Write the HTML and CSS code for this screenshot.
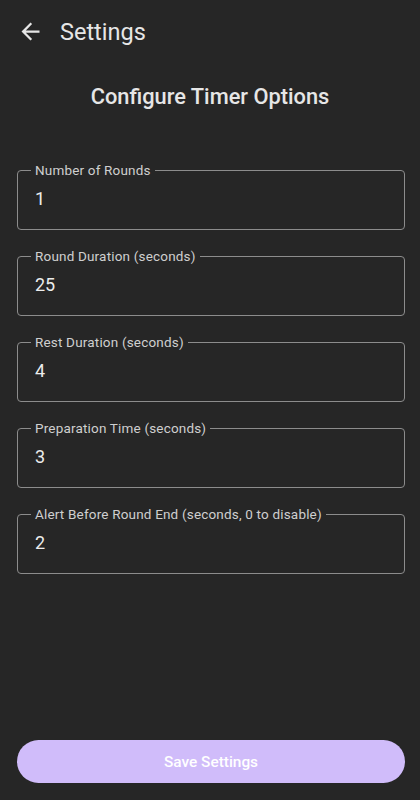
FILE: index.html
```html
<!DOCTYPE html>
<html lang="en">
<head>
<meta charset="utf-8">
<title>Settings</title>
<link rel="stylesheet" href="styles.css">
</head>
<body>
<div class="page">
  <header class="appbar">
    <svg class="back" viewBox="0 0 24 24" width="27" height="27" aria-hidden="true"><path d="M20 11H7.83l5.59-5.59L12 4l-8 8 8 8 1.41-1.41L7.83 13H20v-2z" fill="#e6e6e6"/></svg>
    <span class="appbar-title">Settings</span>
  </header>
  <h2 class="heading">Configure Timer Options</h2>
  <form class="form">
    <fieldset class="field"><legend class="field-label">Number of Rounds</legend><div class="field-value">1</div></fieldset>
    <fieldset class="field"><legend class="field-label">Round Duration (seconds)</legend><div class="field-value">25</div></fieldset>
    <fieldset class="field"><legend class="field-label">Rest Duration (seconds)</legend><div class="field-value">4</div></fieldset>
    <fieldset class="field"><legend class="field-label">Preparation Time (seconds)</legend><div class="field-value">3</div></fieldset>
    <fieldset class="field"><legend class="field-label">Alert Before Round End (seconds, 0 to disable)</legend><div class="field-value">2</div></fieldset>
  </form>
  <div class="spacer"></div>
  <button class="save" type="button">Save Settings</button>
</div>
</body>
</html>
```
FILE: styles.css
```css
html, body {
  margin: 0;
  padding: 0;
  background: #262626;
}
body {
  font-family: Roboto, "Liberation Sans", sans-serif;
  color: #e6e6e6;
}
.page {
  display: flex;
  flex-direction: column;
  min-height: 800px;
  box-sizing: border-box;
  padding-bottom: 17px;
}
.appbar {
  height: 63px;
  display: flex;
  align-items: center;
  gap: 16px;
  padding-left: 17px;
}
.back {
  display: block;
  flex: none;
}
.appbar-title {
  font-size: 23.5px;
  line-height: 28px;
  color: #e6e6e6;
}
.heading {
  margin: 20px 0 0;
  text-align: center;
  font-size: 21.8px;
  line-height: 28px;
  font-weight: 500;
  color: #e6e6e6;
}
.form {
  margin: 51px 15px 0 17px;
  display: flex;
  flex-direction: column;
  gap: 18px;
}
.field {
  margin: 0;
  min-width: 0;
  border: 1px solid #8c8c8c;
  border-radius: 4px;
  padding: 9px 13px 18px;
}
.field-label {
  padding: 0 4px;
  font-size: 13.5px;
  letter-spacing: 0.18px;
  line-height: 16px;
  color: #cfcfcf;
}
.field-value {
  padding-left: 4px;
  font-size: 18px;
  line-height: 24px;
  color: #ececec;
}
.spacer {
  flex: 1;
}
.save {
  margin: 0 15px 0 17px;
  height: 43px;
  border: none;
  border-radius: 22px;
  background: #d0bcfa;
  color: #ffffff;
  font-family: Roboto, "Liberation Sans", sans-serif;
  font-size: 15.4px;
  font-weight: 500;
}
```
